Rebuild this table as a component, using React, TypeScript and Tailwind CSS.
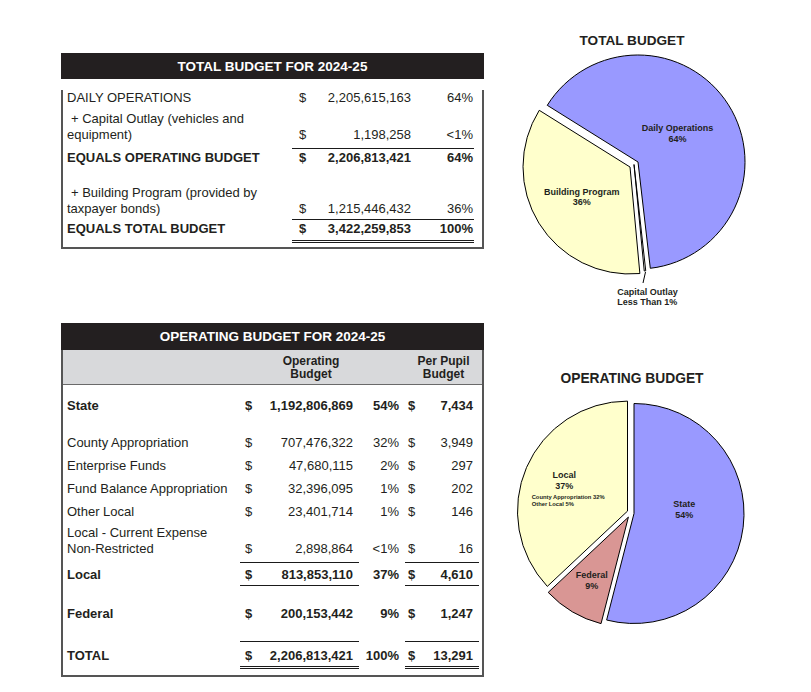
import React from "react";

const rad = (d: number) => (d * Math.PI) / 180;
function wedge(cx: number, cy: number, r: number, a0: number, a1: number) {
  const x0 = cx + r * Math.cos(rad(a0));
  const y0 = cy + r * Math.sin(rad(a0));
  const x1 = cx + r * Math.cos(rad(a1));
  const y1 = cy + r * Math.sin(rad(a1));
  const large = a1 - a0 > 180 ? 1 : 0;
  return `M${cx} ${cy} L${x0.toFixed(2)} ${y0.toFixed(2)} A${r} ${r} 0 ${large} 1 ${x1.toFixed(2)} ${y1.toFixed(2)} Z`;
}

const INK = "#231f20";
const FONT = "'Liberation Sans', Arial, sans-serif";

function T1Row({
  label,
  amount,
  pct,
  bold,
  className = "",
}: {
  label: React.ReactNode;
  amount: string;
  pct: string;
  bold?: boolean;
  className?: string;
}) {
  return (
    <div className={`flex items-end ${bold ? "font-bold" : ""} ${className}`}>
      <div className="w-[229px] pl-[4px]">{label}</div>
      <div className="w-[182px] flex">
        <div className="w-[119px] flex justify-between pl-[7px]">
          <span>$</span>
          <span>{amount}</span>
        </div>
        <div className="w-[62px] text-right">{pct}</div>
      </div>
    </div>
  );
}

function T1Rule({ className = "" }: { className?: string }) {
  return <div className={`ml-[229px] w-[182px] h-px bg-[#1a1a1a] ${className}`} />;
}

function TotalBudgetTable() {
  return (
    <div className="w-[423px]">
      <div className="h-[26px] pt-[2px] bg-[#231f20] text-white font-bold text-[13.5px] leading-4 flex items-center justify-center">
        TOTAL BUDGET FOR 2024-25
      </div>
      <div className="border-x-2 border-b-2 border-[#555] text-[13px] leading-4 pb-[4px]">
        <T1Row className="mt-[11px]" label="DAILY OPERATIONS" amount="2,205,615,163" pct="64%" />
        <T1Row
          className="mt-[5px]"
          label={
            <>
              <span className="pl-[4px]">+ Capital Outlay (vehicles and</span>
              <br />
              equipment)
            </>
          }
          amount="1,198,258"
          pct="<1%"
        />
        <T1Rule className="mt-[5px]" />
        <T1Row className="mt-[1px]" bold label="EQUALS OPERATING BUDGET" amount="2,206,813,421" pct="64%" />
        <T1Row
          className="mt-[19px]"
          label={
            <>
              <span className="pl-[4px]">+ Building Program (provided by</span>
              <br />
              taxpayer bonds)
            </>
          }
          amount="1,215,446,432"
          pct="36%"
        />
        <T1Rule className="mt-[2px]" />
        <T1Row className="mt-[1px]" bold label="EQUALS TOTAL BUDGET" amount="3,422,259,853" pct="100%" />
        <div className="ml-[229px] w-[182px] h-[3px] border-y border-[#1a1a1a] mt-[3px]" />
      </div>
    </div>
  );
}

function T2Row({
  label,
  a,
  pct,
  b,
  bold,
  className = "",
}: {
  label: React.ReactNode;
  a: string;
  pct: string;
  b: string;
  bold?: boolean;
  className?: string;
}) {
  return (
    <div className={`flex items-end ${bold ? "font-bold" : ""} ${className}`}>
      <div className="w-[177px] pl-[4px]">{label}</div>
      <div className="w-[119px] flex justify-between pl-[5px] pr-[6px]">
        <span>$</span>
        <span>{a}</span>
      </div>
      <div className="w-[46px] text-right pr-[6px]">{pct}</div>
      <div className="w-[74px] flex justify-between pl-[3px] pr-[6px]">
        <span>$</span>
        <span>{b}</span>
      </div>
    </div>
  );
}

function T2Rule({ className = "", double }: { className?: string; double?: boolean }) {
  const line = double ? "h-[3px] border-y border-[#1a1a1a]" : "h-px bg-[#1a1a1a]";
  return (
    <div className={`flex ${className}`}>
      <div className="w-[177px]" />
      <div className={`w-[119px] ${line}`} />
      <div className="w-[46px]" />
      <div className={`w-[74px] ${line}`} />
    </div>
  );
}

function OperatingBudgetTable() {
  return (
    <div className="w-[423px] mt-[74px]">
      <div className="h-[27px] pt-[1px] bg-[#231f20] text-white font-bold text-[13.5px] leading-4 flex items-center justify-center">
        OPERATING BUDGET FOR 2024-25
      </div>
      <div className="border-x-2 border-b-2 border-[#555] text-[13px] leading-4 pb-[6px]">
        <div className="h-[35px] bg-[#d8d9db] border-b border-[#6a6a6a] flex text-[12px] font-bold leading-[13.3px] pt-[5px]">
          <div className="w-[190px]" />
          <div className="w-[116px] text-center">
            Operating
            <br />
            Budget
          </div>
          <div className="w-[36px]" />
          <div className="w-[77px] text-center">
            Per Pupil
            <br />
            Budget
          </div>
        </div>
        <T2Row className="mt-[13px]" bold label="State" a="1,192,806,869" pct="54%" b="7,434" />
        <T2Row className="mt-[21px]" label="County Appropriation" a="707,476,322" pct="32%" b="3,949" />
        <T2Row className="mt-[7px]" label="Enterprise Funds" a="47,680,115" pct="2%" b="297" />
        <T2Row className="mt-[7px]" label="Fund Balance Appropriation" a="32,396,095" pct="1%" b="202" />
        <T2Row className="mt-[7px]" label="Other Local" a="23,401,714" pct="1%" b="146" />
        <T2Row
          className="mt-[5px]"
          label={
            <>
              Local - Current Expense
              <br />
              Non-Restricted
            </>
          }
          a="2,898,864"
          pct="<1%"
          b="16"
        />
        <T2Rule className="mt-[5px]" />
        <T2Row className="mt-[4px]" bold label="Local" a="813,853,110" pct="37%" b="4,610" />
        <T2Rule className="mt-[2px]" />
        <T2Row className="mt-[20px]" bold label="Federal" a="200,153,442" pct="9%" b="1,247" />
        <T2Rule className="mt-[19px]" />
        <T2Row className="mt-[6px]" bold label="TOTAL" a="2,206,813,421" pct="100%" b="13,291" />
        <T2Rule className="mt-[2px]" double />
      </div>
    </div>
  );
}

function Label({ x, y, children, size = 9, anchor = "middle" }: { x: number; y: number; children: React.ReactNode; size?: number; anchor?: "middle" | "start" }) {
  return (
    <text x={x} y={y} fontSize={size} fontWeight="bold" fontFamily={FONT} fill={INK} textAnchor={anchor}>
      {children}
    </text>
  );
}

function TotalPie() {
  const cx = 133,
    cy = 112,
    r = 107;
  return (
    <svg width={254} height={260} className="mt-[1px] block">
      <path d={wedge(cx, cy, r, 212, 443.4)} fill="#9999ff" stroke="#000" strokeWidth={1} />
      <path d={wedge(cx - 4, cy + 2.5, r, 83.7, 84.5)} fill="#ffffff" stroke="#000" strokeWidth={1} />
      <path d={wedge(cx - 8, cy + 5, r, 84.7, 212)} fill="#ffffcc" stroke="#000" strokeWidth={1} />
      <line x1={140.5} y1={222} x2={138} y2={233} stroke="#000" strokeWidth={1} />
      <Label x={172.5} y={81.4}>Daily Operations</Label>
      <Label x={172.5} y={91.5}>64%</Label>
      <Label x={76.7} y={144.7}>Building Program</Label>
      <Label x={76.7} y={154.7}>36%</Label>
      <Label x={112.3} y={244.7} anchor="start">Capital Outlay</Label>
      <Label x={112.3} y={255} anchor="start">Less Than 1%</Label>
    </svg>
  );
}

function OperatingPie() {
  const cx = 129,
    cy = 123.5,
    r = 110;
  return (
    <svg width={254} height={250} className="mt-[3px] block">
      <path d={wedge(cx, cy, r, -90, 104.4)} fill="#9999ff" stroke="#000" strokeWidth={1} />
      <path d={wedge(cx - 5.6, cy + 3.6, r, 104.4, 136.8)} fill="#d99694" stroke="#000" strokeWidth={1} />
      <path d={wedge(cx - 6.5, cy - 2.4, r, 136.8, 270)} fill="#ffffcc" stroke="#000" strokeWidth={1} />
      <Label x={59.3} y={88.3}>Local</Label>
      <Label x={59.3} y={99}>37%</Label>
      <Label x={26.7} y={108.5} size={5.8} anchor="start">County Appropriation 32%</Label>
      <Label x={26.7} y={115.5} size={5.8} anchor="start">Other Local 5%</Label>
      <Label x={179.3} y={116.7}>State</Label>
      <Label x={179.3} y={127.7}>54%</Label>
      <Label x={86.7} y={188.3}>Federal</Label>
      <Label x={86.7} y={199}>9%</Label>
    </svg>
  );
}

export default function App() {
  return (
    <div className="w-[811px] h-[692px] bg-white flex font-['Liberation_Sans',Arial,sans-serif] text-[#231f20] overflow-hidden">
      <div className="w-[505px] pl-[61px] pt-[53px] flex flex-col">
        <TotalBudgetTable />
        <OperatingBudgetTable />
      </div>
      <div className="w-[254px] flex flex-col">
        <div className="mt-[33px] text-center font-bold text-[13.6px] leading-4">TOTAL BUDGET</div>
        <TotalPie />
        <div className="mt-[61px] text-center font-bold text-[13.8px] leading-4">OPERATING BUDGET</div>
        <OperatingPie />
      </div>
    </div>
  );
}
